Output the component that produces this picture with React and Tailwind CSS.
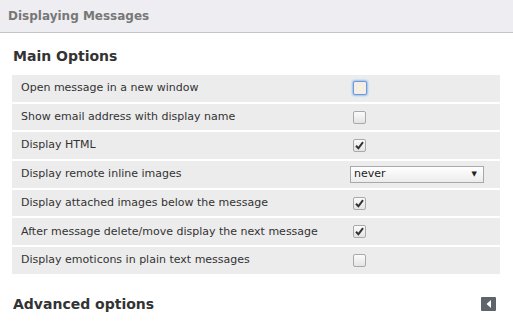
import React from "react";

const rows = [
  { label: "Open message in a new window", type: "focus" },
  { label: "Show email address with display name", type: "off" },
  { label: "Display HTML", type: "on" },
  { label: "Display remote inline images", type: "select" },
  { label: "Display attached images below the message", type: "on" },
  { label: "After message delete/move display the next message", type: "on" },
  { label: "Display emoticons in plain text messages", type: "off" },
];

function Check({ type }) {
  if (type === "focus") {
    return (
      <div className="w-[14px] h-[14px] rounded-[2px] border border-[#6f9ad8] bg-[#f3efe6] shadow-[0_0_2px_1px_#9dbdf0]" />
    );
  }
  return (
    <div className="w-[13px] h-[13px] rounded-[2px] border border-[#a9a9a9] bg-gradient-to-b from-[#fbfbfb] to-[#e4e4e4] flex items-center justify-center">
      {type === "on" && (
        <svg width="9" height="9" viewBox="0 0 9 9">
          <path d="M1 4.8 L3.4 7.3 L8 1.2" stroke="#333" strokeWidth="2" fill="none" />
        </svg>
      )}
    </div>
  );
}

export default function App() {
  return (
    <div className="w-[513px] h-[336px] bg-white overflow-hidden font-['DejaVu_Sans',Verdana,sans-serif]">
      <div className="h-[33px] bg-[#eeeef2] border-b border-[#c4c4c4] flex items-center pl-[8px]">
        <span className="text-[12px] font-bold text-[#777]">Displaying Messages</span>
      </div>
      <div className="pl-[12px] pr-[13px]">
        <div className="h-[42px] flex items-center pl-[1px] pt-[5px]">
          <span className="text-[14px] font-bold text-[#333]">Main Options</span>
        </div>
        <div className="flex flex-col gap-[2px]">
          {rows.map((r) => (
            <div key={r.label} className="h-[26.7px] bg-[#ececec] flex items-center">
              <div className="w-[337px] pl-[9px] text-[11px] text-[#333]">{r.label}</div>
              {r.type === "select" ? (
                <div className="ml-[1px] w-[134px] h-[17px] border border-[#a8a8a8] bg-gradient-to-b from-[#ffffff] to-[#ececec] flex items-center justify-between pl-[3px] pr-[6px] text-[11px] text-[#222]">
                  <span>never</span>
                  <span className="text-[7px]">▼</span>
                </div>
              ) : (
                <div className="ml-[4px]">
                  <Check type={r.type} />
                </div>
              )}
            </div>
          ))}
        </div>
        <div className="h-[62px] flex items-center justify-between pl-[1px] pr-[4px] pb-[1px]">
          <span className="text-[14px] font-bold text-[#333]">Advanced options</span>
          <div className="w-[15px] h-[14px] rounded-[1px] bg-[#5d646b] flex items-center justify-center">
            <svg width="6" height="8" viewBox="0 0 6 8">
              <path d="M5 0 L0.5 4 L5 8 Z" fill="#fff" />
            </svg>
          </div>
        </div>
      </div>
    </div>
  );
}
